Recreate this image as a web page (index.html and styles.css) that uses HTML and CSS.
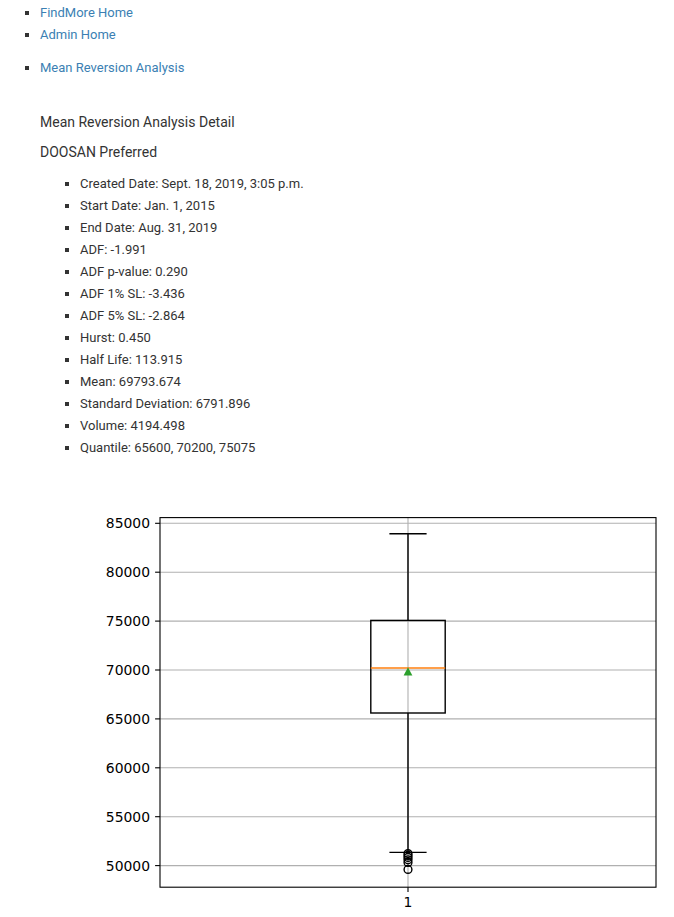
FILE: index.html
```html
<!DOCTYPE html>
<html>
<head>
<meta charset="utf-8">
<link rel="stylesheet" href="styles.css">
</head>
<body>
<ul class="nav nav-top">
  <li><a href="#">FindMore Home</a></li>
  <li><a href="#">Admin Home</a></li>
</ul>
<ul class="nav nav-sub">
  <li><a href="#">Mean Reversion Analysis</a></li>
</ul>
<div class="detail">
  <p class="title">Mean Reversion Analysis Detail</p>
  <p class="name">DOOSAN Preferred</p>
  <ul class="facts">
    <li>Created Date: Sept. 18, 2019, 3:05 p.m.</li>
    <li>Start Date: Jan. 1, 2015</li>
    <li>End Date: Aug. 31, 2019</li>
    <li>ADF: -1.991</li>
    <li>ADF p-value: 0.290</li>
    <li>ADF 1% SL: -3.436</li>
    <li>ADF 5% SL: -2.864</li>
    <li>Hurst: 0.450</li>
    <li>Half Life: 113.915</li>
    <li>Mean: 69793.674</li>
    <li>Standard Deviation: 6791.896</li>
    <li>Volume: 4194.498</li>
    <li>Quantile: 65600, 70200, 75075</li>
  </ul>
</div>
<svg class="chart" width="594" height="480" viewBox="0 0 594 480" xmlns="http://www.w3.org/2000/svg">
  <rect x="0" y="0" width="594" height="480" fill="#fff"/>
  <g stroke="#b0b0b0" stroke-width="1.1">
    <line x1="80" x2="576" y1="63.3" y2="63.3"/>
    <line x1="80" x2="576" y1="112.2" y2="112.2"/>
    <line x1="80" x2="576" y1="161.1" y2="161.1"/>
    <line x1="80" x2="576" y1="210.0" y2="210.0"/>
    <line x1="80" x2="576" y1="258.9" y2="258.9"/>
    <line x1="80" x2="576" y1="307.8" y2="307.8"/>
    <line x1="80" x2="576" y1="356.7" y2="356.7"/>
    <line x1="80" x2="576" y1="405.6" y2="405.6"/>
    <line x1="328" x2="328" y1="57.6" y2="427.2"/>
  </g>
  <g stroke="#000" stroke-width="1.4" fill="none">
    <line x1="328" x2="328" y1="160.4" y2="73.7"/>
    <line x1="309.4" x2="346.6" y1="73.7" y2="73.7"/>
    <line x1="328" x2="328" y1="253.0" y2="392.4"/>
    <line x1="309.4" x2="346.6" y1="392.4" y2="392.4"/>
    <rect x="290.8" y="160.4" width="74.4" height="92.6"/>
  </g>
  <line x1="290.8" x2="365.2" y1="208.0" y2="208.0" stroke="#ff7f0e" stroke-width="1.4"/>
  <polygon points="328,207.2 332.4,215.4 323.6,215.4" fill="#2ca02c"/>
  <g stroke="#000" stroke-width="1.4" fill="none">
    <circle cx="328" cy="393.6" r="3.9"/>
    <circle cx="328" cy="395.4" r="3.9"/>
    <circle cx="328" cy="397.4" r="3.9"/>
    <circle cx="328" cy="399.8" r="3.9"/>
    <circle cx="328" cy="402.4" r="3.9"/>
    <circle cx="328" cy="409.4" r="3.9"/>
  </g>
  <rect x="80" y="57.6" width="496" height="369.6" fill="none" stroke="#000" stroke-width="1.1"/>
  <g stroke="#000" stroke-width="1.1">
    <line x1="75.1" x2="80" y1="63.3" y2="63.3"/>
    <line x1="75.1" x2="80" y1="112.2" y2="112.2"/>
    <line x1="75.1" x2="80" y1="161.1" y2="161.1"/>
    <line x1="75.1" x2="80" y1="210.0" y2="210.0"/>
    <line x1="75.1" x2="80" y1="258.9" y2="258.9"/>
    <line x1="75.1" x2="80" y1="307.8" y2="307.8"/>
    <line x1="75.1" x2="80" y1="356.7" y2="356.7"/>
    <line x1="75.1" x2="80" y1="405.6" y2="405.6"/>
    <line x1="328" x2="328" y1="427.2" y2="432.1"/>
  </g>
  <g class="ticks" text-anchor="end">
    <text x="70" y="68.3">85000</text>
    <text x="70" y="117.2">80000</text>
    <text x="70" y="166.1">75000</text>
    <text x="70" y="215.0">70000</text>
    <text x="70" y="263.9">65000</text>
    <text x="70" y="312.8">60000</text>
    <text x="70" y="361.7">55000</text>
    <text x="70" y="410.6">50000</text>
  </g>
  <text class="ticks" x="328" y="447" text-anchor="middle">1</text>
</svg>
</body>
</html>
```

FILE: styles.css
```css
html, body {
  margin: 0;
  padding: 0;
  background: #fff;
}
body {
  font-family: Roboto, "Liberation Sans", sans-serif;
  font-size: 13px;
  color: #333;
}
a {
  color: #3b7fb3;
  text-decoration: none;
}
ul {
  list-style: square;
  margin: 0;
  padding-left: 40px;
}
li {
  line-height: 22px;
}
.nav-top {
  margin-top: 2px;
}
.nav-sub {
  margin-top: 11px;
}
.detail {
  padding-left: 40px;
}
.title, .name {
  font-size: 14px;
  line-height: 20px;
  margin: 0;
}
.title {
  margin-top: 33px;
}
.name {
  margin-top: 10px;
}
.facts {
  margin-top: 11px;
}
.chart {
  display: block;
  margin-left: 80px;
  margin-top: 1px;
}
.ticks {
  font-family: "DejaVu Sans", sans-serif;
  font-size: 13.9px;
  fill: #000;
}
```
